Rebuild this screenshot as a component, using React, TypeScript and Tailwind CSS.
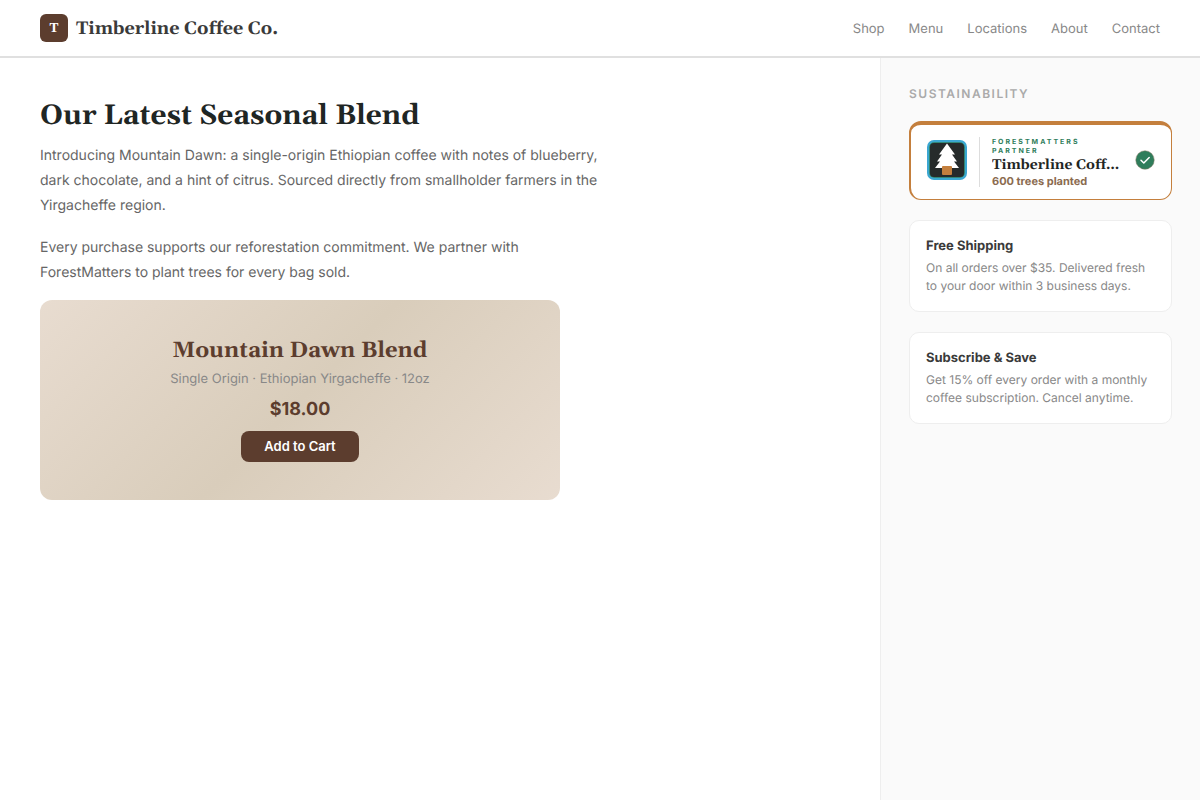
import type { ReactNode } from 'react';

interface InfoCardProps {
  title: string;
  children: ReactNode;
}

const navItems = ['Shop', 'Menu', 'Locations', 'About', 'Contact'];

const infoCards = [
  {
    title: 'Free Shipping',
    text: 'On all orders over $35. Delivered fresh to your door within 3 business days.',
  },
  {
    title: 'Subscribe & Save',
    text: 'Get 15% off every order with a monthly coffee subscription. Cancel anytime.',
  },
];

function Header() {
  return (
    <header className="flex h-[58px] shrink-0 items-center justify-between border-b-2 border-[#e0e0e0] bg-white px-10">
      <a href="#home" className="flex items-center gap-2">
        <span className="flex size-7 items-center justify-center rounded-md bg-[#5c3d2e] pt-1 font-[Georgia,Gelasio,'Liberation_Serif',serif] text-[13px] font-bold text-white">
          T
        </span>
        <span className="pt-1 font-[Georgia,Gelasio,'Liberation_Serif',serif] text-lg font-bold text-[#3a3a3a]">
          Timberline Coffee Co.
        </span>
      </a>
      <nav className="flex gap-6 pt-1 text-[13px] text-[#888]">
        {navItems.map((item) => (
          <a key={item} href={`#${item.toLowerCase()}`}>
            {item}
          </a>
        ))}
      </nav>
    </header>
  );
}

function ProductCard() {
  return (
    <section className="flex min-h-[200px] flex-col items-center justify-center rounded-xl bg-[linear-gradient(135deg,#e8dcd0,#d9cdbb_50%,#e8dcd0)]">
      <h2 className="mb-1.5 font-[Georgia,Gelasio,'Liberation_Serif',serif] text-[22px] leading-[27px] font-bold text-[#5c3d2e]">
        Mountain Dawn Blend
      </h2>
      <p className="mb-2.5 text-[13px] leading-4 text-[#888]">
        Single Origin · Ethiopian Yirgacheffe · 12oz
      </p>
      <p className="mb-2 text-lg leading-[26px] font-bold text-[#5c3d2e]">$18.00</p>
      <button
        type="button"
        className="rounded-lg bg-[#5c3d2e] px-[23px] py-2 text-[13px] leading-[15px] font-semibold text-white"
      >
        Add to Cart
      </button>
    </section>
  );
}

function TreeLogo() {
  return (
    <svg viewBox="0 0 40 40" className="mb-1 size-10 shrink-0" aria-hidden="true">
      <rect width="40" height="40" rx="7" fill="#3ba7d1" />
      <rect x="2.200" y="2.200" width="35.600" height="35.600" rx="5" fill="#2f7d5b" />
      <rect x="3" y="3" width="34" height="34" rx="4" fill="#262b2b" />
      <path
        d="M20 3.500L28 14.500H25L30 21.500H27L32 28H8L13 21.500H10L15 14.500H12Z"
        fill="#fff"
      />
      <rect x="15" y="26" width="10" height="9" rx="1" fill="#c47f3d" />
    </svg>
  );
}

function PartnerBadge() {
  return (
    <section className="flex items-center gap-3 rounded-xl border border-t-4 border-l-2 border-[#c47f3d] bg-white px-4 py-3">
      <TreeLogo />
      <div className="w-px shrink-0 self-stretch bg-[#ddd]" />
      <div className="min-w-0 flex-1">
        <p className="text-[7px] leading-[9px] font-bold tracking-[2px] text-[#2f7d5b] uppercase">
          ForestMatters Partner
        </p>
        <p className="truncate font-[Georgia,Gelasio,'Liberation_Serif',serif] text-sm leading-5 font-bold text-[#1f2624]">
          Timberline Coffee Co.
        </p>
        <p className="text-[11px] leading-3 font-bold text-[#8b6b4f]">600 trees planted</p>
      </div>
      <svg viewBox="0 0 20 20" className="mb-1 size-5 shrink-0" aria-label="Verified" role="img">
        <circle cx="10" cy="10" r="9.250" fill="#2f7d5b" stroke="#8b7a66" strokeWidth="0.500" />
        <path
          d="M6 10.200L8.800 13L14.200 7.500"
          fill="none"
          stroke="#fff"
          strokeWidth="1.500"
          strokeLinecap="round"
          strokeLinejoin="round"
        />
      </svg>
    </section>
  );
}

function InfoCard({ title, children }: Readonly<InfoCardProps>) {
  return (
    <section className="rounded-[10px] border border-[#eee] bg-white p-4">
      <h3 className="mb-1 text-[13px] leading-[18px] font-bold text-[#3a3a3a]">{title}</h3>
      <p className="text-xs leading-[18px] text-[#888]">{children}</p>
    </section>
  );
}

export default function App() {
  return (
    <div className="flex min-h-screen flex-col bg-white font-[Inter,'Liberation_Sans',sans-serif] [text-rendering:geometricPrecision]">
      <Header />
      <div className="flex flex-1">
        <main className="min-w-0 flex-1 p-10">
          <h1 className="mb-[9px] font-[Georgia,Gelasio,'Liberation_Serif',serif] text-[28px] leading-9 font-bold text-[#1f2624]">
            Our Latest Seasonal Blend
          </h1>
          <div className="mb-[15px] max-w-[560px] space-y-[17px] text-sm leading-[25px] text-[#666]">
            <p>
              Introducing Mountain Dawn: a single-origin Ethiopian coffee with notes of blueberry,
              dark chocolate, and a hint of citrus. Sourced directly from smallholder farmers in the
              Yirgacheffe region.
            </p>
            <p>
              Every purchase supports our reforestation commitment. We partner with ForestMatters to
              plant trees for every bag sold.
            </p>
          </div>
          <div className="max-w-[520px]">
            <ProductCard />
          </div>
        </main>
        <aside className="flex w-80 shrink-0 flex-col gap-5 border-l border-[#eee] bg-[#fafafa] p-7">
          <h2 className="text-xs leading-[15px] font-semibold tracking-[1.5px] text-[#aaa] uppercase">
            Sustainability
          </h2>
          <PartnerBadge />
          {infoCards.map((card) => (
            <InfoCard key={card.title} title={card.title}>
              {card.text}
            </InfoCard>
          ))}
        </aside>
      </div>
    </div>
  );
}
